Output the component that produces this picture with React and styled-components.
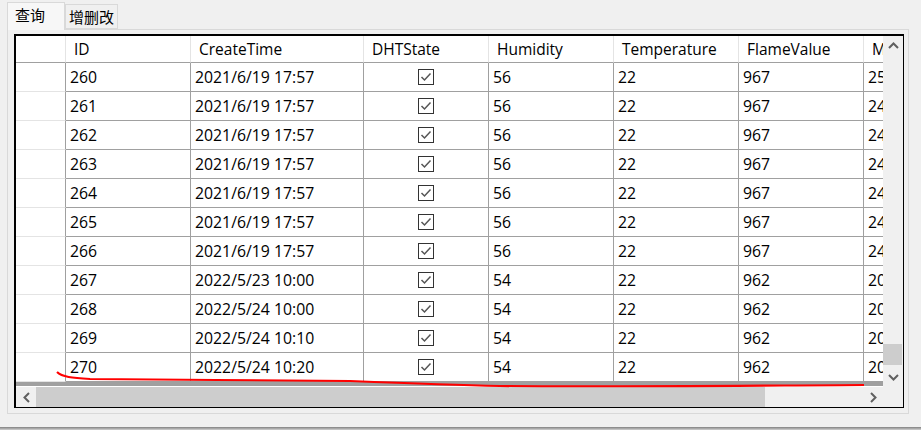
import styled, { createGlobalStyle } from "styled-components";

const GlobalStyle = createGlobalStyle`
  html, body {
    margin: 0;
    padding: 0;
    background: #f0f0f0;
  }
`;

const Window = styled.div`
  width: 921px;
  height: 430px;
  box-sizing: border-box;
  padding: 2px 12px 0 7px;
  background: #f0f0f0;
  overflow: hidden;
  font-family: "Open Sans", "Noto Sans CJK SC", sans-serif;
  font-size: 15.8px;
  color: #000;
`;

const TabStrip = styled.div`
  display: flex;
  align-items: flex-end;
  height: 27px;
`;

const Tab = styled.div`
  box-sizing: border-box;
  display: flex;
  align-items: center;
  justify-content: center;
  height: ${(props) => (props.active ? "28px" : "25px")};
  width: ${(props) => (props.active ? "58px" : "53px")};
  padding-right: ${(props) => (props.active ? "12px" : "0")};
  padding-bottom: ${(props) => (props.active ? "4px" : "1px")};
  margin-bottom: ${(props) => (props.active ? "-1px" : "0")};
  border: 1px solid #d9d9d9;
  border-bottom: ${(props) => (props.active ? "none" : "1px solid #d9d9d9")};
  background: ${(props) => (props.active ? "#f7f7f7" : "#f0f0f0")};
  font-family: "Noto Sans CJK SC", sans-serif;
  font-size: 15px;
  position: relative;
`;

const Pane = styled.div`
  box-sizing: border-box;
  height: 385px;
  padding: 4px 4px 5px 6px;
  border: 1px solid #d9d9d9;
`;

const Frame = styled.div`
  box-sizing: border-box;
  position: relative;
  height: 374px;
  width: 890px;
  border: 1px solid #000;
  border-left-width: 2px;
  border-top-width: 2px;
  display: grid;
  grid-template-columns: 867px 20px;
  grid-template-rows: 351px 20px;
  background: #f0f0f0;
`;

const Viewport = styled.div`
  overflow: hidden;
  background: #fff;
  box-sizing: border-box;
`;

const Grid = styled.div`
  width: 960px;
  background: #fff;
  border-bottom: 4px solid #a0a0a0;
`;

const Row = styled.div`
  display: grid;
  grid-template-columns: 50px 125px 173px 125px 125px 125px 125px 125px;
  height: ${(props) => (props.header ? "27px" : "29px")};
  box-sizing: border-box;
`;

const Cell = styled.div`
  box-sizing: border-box;
  display: flex;
  align-items: center;
  justify-content: ${(props) => (props.center ? "center" : "flex-start")};
  padding-left: ${(props) => (props.center ? "0" : "4px")};
  white-space: nowrap;
  overflow: hidden;
  border-right: 1px solid #a0a0a0;
  border-bottom: 1px solid #a0a0a0;
`;

const HeadCell = styled(Cell)`
  padding-left: 8px;
  font-size: 15.5px;
  border-right: 1px solid #e4e4e4;
`;

const Corner = styled.div`
  box-sizing: border-box;
  border-right: 1px solid #e4e4e4;
  border-bottom: 1px solid #a0a0a0;
`;

const RowHead = styled.div`
  box-sizing: border-box;
  border-right: 1px solid #a0a0a0;
  border-bottom: 1px solid #e4e4e4;
`;

const CheckBox = styled.svg`
  width: 16px;
  height: 16px;
  display: block;
`;

const ScrollV = styled.div`
  position: relative;
  background: #f0f0f0;
  display: flex;
  flex-direction: column;
  align-items: center;
  justify-content: space-between;
  padding: 4px 0;
  box-sizing: border-box;
`;

const ThumbV = styled.div`
  position: absolute;
  left: 0;
  right: 1px;
  top: 308px;
  height: 21px;
  background: #cdcdcd;
`;

const ScrollH = styled.div`
  display: flex;
  align-items: center;
  background: #f0f0f0;
  position: relative;
`;

const ArrowSlot = styled.div`
  width: 20px;
  height: 20px;
  flex: none;
  display: flex;
  align-items: center;
  justify-content: center;
`;

const ThumbH = styled.div`
  width: 729px;
  height: 100%;
  background: #cdcdcd;
`;

const Spacer = styled.div`
  flex: 1;
`;

const Corner2 = styled.div`
  background: #f0f0f0;
`;

const Ink = styled.svg`
  position: absolute;
  left: -16px;
  top: -36px;
  pointer-events: none;
`;

const BottomEdge = styled.div`
  height: 3px;
  margin: 13px -12px 0 -7px;
  background: linear-gradient(#808080, #d0d0d0);
`;

const Arrow = ({ d }) => (
  <svg width="11" height="11" viewBox="0 0 11 11" fill="none" stroke="#606060" strokeWidth="2">
    <path d={d} />
  </svg>
);

const rows = [
  ["260", "2021/6/19 17:57", "56", "22", "967", "25"],
  ["261", "2021/6/19 17:57", "56", "22", "967", "24"],
  ["262", "2021/6/19 17:57", "56", "22", "967", "24"],
  ["263", "2021/6/19 17:57", "56", "22", "967", "24"],
  ["264", "2021/6/19 17:57", "56", "22", "967", "24"],
  ["265", "2021/6/19 17:57", "56", "22", "967", "24"],
  ["266", "2021/6/19 17:57", "56", "22", "967", "24"],
  ["267", "2022/5/23 10:00", "54", "22", "962", "20"],
  ["268", "2022/5/24 10:00", "54", "22", "962", "20"],
  ["269", "2022/5/24 10:10", "54", "22", "962", "20"],
  ["270", "2022/5/24 10:20", "54", "22", "962", "20"],
];

const heads = ["ID", "CreateTime", "DHTState", "Humidity", "Temperature", "FlameValue", "MQ2Value"];

const App = () => {
  return (
    <Window>
      <GlobalStyle />
      <TabStrip>
        <Tab active>查询</Tab>
        <Tab>增删改</Tab>
      </TabStrip>
      <Pane>
        <Frame>
          <Viewport>
            <Grid>
              <Row header>
                <Corner />
                {heads.map((h) => (
                  <HeadCell key={h}>{h}</HeadCell>
                ))}
              </Row>
              {rows.map((r) => (
                <Row key={r[0]}>
                  <RowHead />
                  <Cell>{r[0]}</Cell>
                  <Cell>{r[1]}</Cell>
                  <Cell center>
                    <CheckBox viewBox="0 0 16 16" fill="none">
                      <rect x="0.5" y="0.5" width="15" height="15" stroke="#333" />
                      <path d="M3.5 8 L6.5 11 L12.5 4.5" stroke="#555" strokeWidth="1.5" />
                    </CheckBox>
                  </Cell>
                  <Cell>{r[2]}</Cell>
                  <Cell>{r[3]}</Cell>
                  <Cell>{r[4]}</Cell>
                  <Cell>{r[5]}</Cell>
                </Row>
              ))}
            </Grid>
          </Viewport>
          <ScrollV>
            <Arrow d="M1 8 L5.5 3.5 L10 8" />
            <ThumbV />
            <Arrow d="M1 3 L5.5 7.5 L10 3" />
          </ScrollV>
          <ScrollH>
            <ArrowSlot>
              <Arrow d="M8 1 L3.5 5.5 L8 10" />
            </ArrowSlot>
            <ThumbH />
            <Spacer />
            <ArrowSlot>
              <Arrow d="M3 1 L7.5 5.5 L3 10" />
            </ArrowSlot>
          </ScrollH>
          <Corner2 />
          <Ink width="921" height="430" viewBox="0 0 921 430" fill="none">
            <path
              d="M57 372 C62 377 72 378 90 379 C150 380 300 380 350 381 C400 383 450 385 500 386 C600 387 700 386 864 385"
              stroke="#ff0000"
              strokeWidth="2.1"
            />
          </Ink>
        </Frame>
      </Pane>
      <BottomEdge />
    </Window>
  );
};

export default App;
